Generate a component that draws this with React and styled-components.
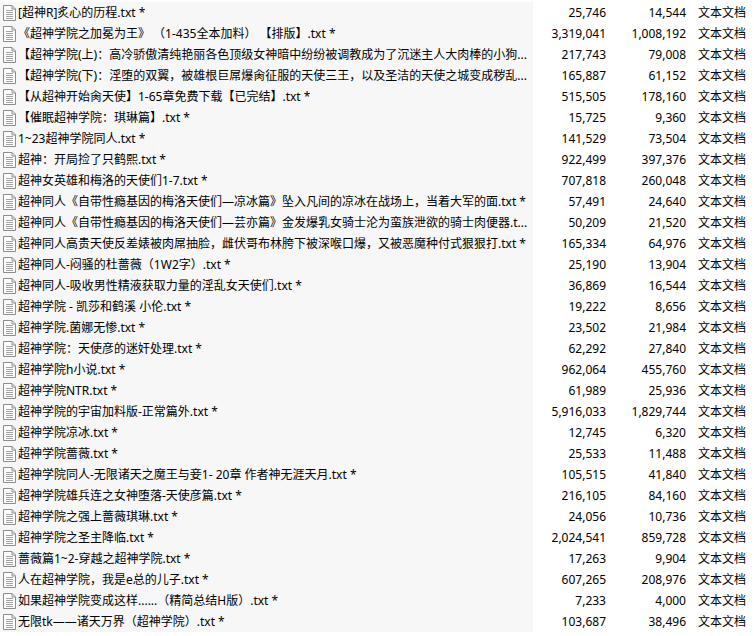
import React from 'react';
import styled, { createGlobalStyle } from 'styled-components';

const GlobalStyle = createGlobalStyle`
  html, body {
    margin: 0;
    padding: 0;
    background: #ffffff;
  }
  body {
    font-family: "Noto Sans", "Noto Sans CJK SC", sans-serif;
    font-size: 12px;
    color: #000;
  }
`;

const List = styled.div`
  width: 754px;
  height: 636px;
  overflow: hidden;
  padding-top: 2px;
  box-sizing: border-box;
  display: flex;
  flex-direction: column;
`;

const Row = styled.div`
  display: grid;
  grid-template-columns: 533px 73px 80px 68px;
  height: 21px;
  line-height: 21px;
  flex-shrink: 0;
`;

const NameCell = styled.div`
  display: flex;
  align-items: center;
  gap: 2px;
  padding-left: 3px;
  background: #f7f7f7;
  overflow: hidden;
  white-space: nowrap;
`;

const NameText = styled.span`
  overflow: hidden;
  white-space: nowrap;
  text-overflow: ellipsis;
`;

const NumCell = styled.div`
  text-align: right;
  white-space: nowrap;
`;

const TypeCell = styled.div`
  padding-left: 12px;
  white-space: nowrap;
`;

const TextFileIcon = () => (
  <svg width="13" height="16" viewBox="0 0 13 16" style={{ flexShrink: 0 }}>
    <path d="M0.5 0.5 H9 L12.5 4 V15.5 H0.5 Z" fill="#fff" stroke="#8c8c8c" />
    <path d="M9 0.5 V4 H12.5" fill="none" stroke="#8c8c8c" />
    <path d="M3 5.5 H10 M3 7.5 H10 M3 9.5 H10 M3 11.5 H10 M3 13.5 H10" stroke="#a3a3a3" />
  </svg>
);

const files = [
  ['[超神R]炙心的历程.txt *', '25,746', '14,544'],
  ['《超神学院之加冕为王》 （1-435全本加料） 【排版】.txt *', '3,319,041', '1,008,192'],
  ['【超神学院(上)：高冷骄傲清纯艳丽各色顶级女神暗中纷纷被调教成为了沉迷主人大肉棒的小狗...', '217,743', '79,008'],
  ['【超神学院(下)：淫堕的双翼，被雄根巨屌爆肏征服的天使三王，以及圣洁的天使之城变成秽乱...', '165,887', '61,152'],
  ['【从超神开始肏天使】1-65章免费下载【已完结】.txt *', '515,505', '178,160'],
  ['【催眠超神学院：琪琳篇】.txt *', '15,725', '9,360'],
  ['1~23超神学院同人.txt *', '141,529', '73,504'],
  ['超神：开局捡了只鹤熙.txt *', '922,499', '397,376'],
  ['超神女英雄和梅洛的天使们1-7.txt *', '707,818', '260,048'],
  ['超神同人《自带性瘾基因的梅洛天使们—凉冰篇》坠入凡间的凉冰在战场上，当着大军的面.txt *', '57,491', '24,640'],
  ['超神同人《自带性瘾基因的梅洛天使们—芸亦篇》金发爆乳女骑士沦为蛮族泄欲的骑士肉便器.t...', '50,209', '21,520'],
  ['超神同人高贵天使反差婊被肉屌抽脸，雌伏哥布林胯下被深喉口爆，又被恶魔种付式狠狠打.txt *', '165,334', '64,976'],
  ['超神同人-闷骚的杜蔷薇（1W2字）.txt *', '25,190', '13,904'],
  ['超神同人-吸收男性精液获取力量的淫乱女天使们.txt *', '36,869', '16,544'],
  ['超神学院 - 凯莎和鹤溪 小伦.txt *', '19,222', '8,656'],
  ['超神学院.菌娜无惨.txt *', '23,502', '21,984'],
  ['超神学院：天使彦的迷奸处理.txt *', '62,292', '27,840'],
  ['超神学院h小说.txt *', '962,064', '455,760'],
  ['超神学院NTR.txt *', '61,989', '25,936'],
  ['超神学院的宇宙加料版-正常篇外.txt *', '5,916,033', '1,829,744'],
  ['超神学院凉冰.txt *', '12,745', '6,320'],
  ['超神学院蔷薇.txt *', '25,533', '11,488'],
  ['超神学院同人-无限诸天之魔王与妾1- 20章 作者神无涯天月.txt *', '105,515', '41,840'],
  ['超神学院雄兵连之女神堕落-天使彦篇.txt *', '216,105', '84,160'],
  ['超神学院之强上蔷薇琪琳.txt *', '24,056', '10,736'],
  ['超神学院之圣主降临.txt *', '2,024,541', '859,728'],
  ['蔷薇篇1~2-穿越之超神学院.txt *', '17,263', '9,904'],
  ['人在超神学院，我是e总的儿子.txt *', '607,265', '208,976'],
  ['如果超神学院变成这样......（精简总结H版）.txt *', '7,233', '4,000'],
  ['无限tk——诸天万界（超神学院）.txt *', '103,687', '38,496'],
];

export default function App() {
  return (
    <>
      <GlobalStyle />
      <List>
        {files.map(([name, size, packed]) => (
          <Row key={name}>
            <NameCell>
              <TextFileIcon />
              <NameText>{name}</NameText>
            </NameCell>
            <NumCell>{size}</NumCell>
            <NumCell>{packed}</NumCell>
            <TypeCell>文本文档</TypeCell>
          </Row>
        ))}
      </List>
    </>
  );
}
